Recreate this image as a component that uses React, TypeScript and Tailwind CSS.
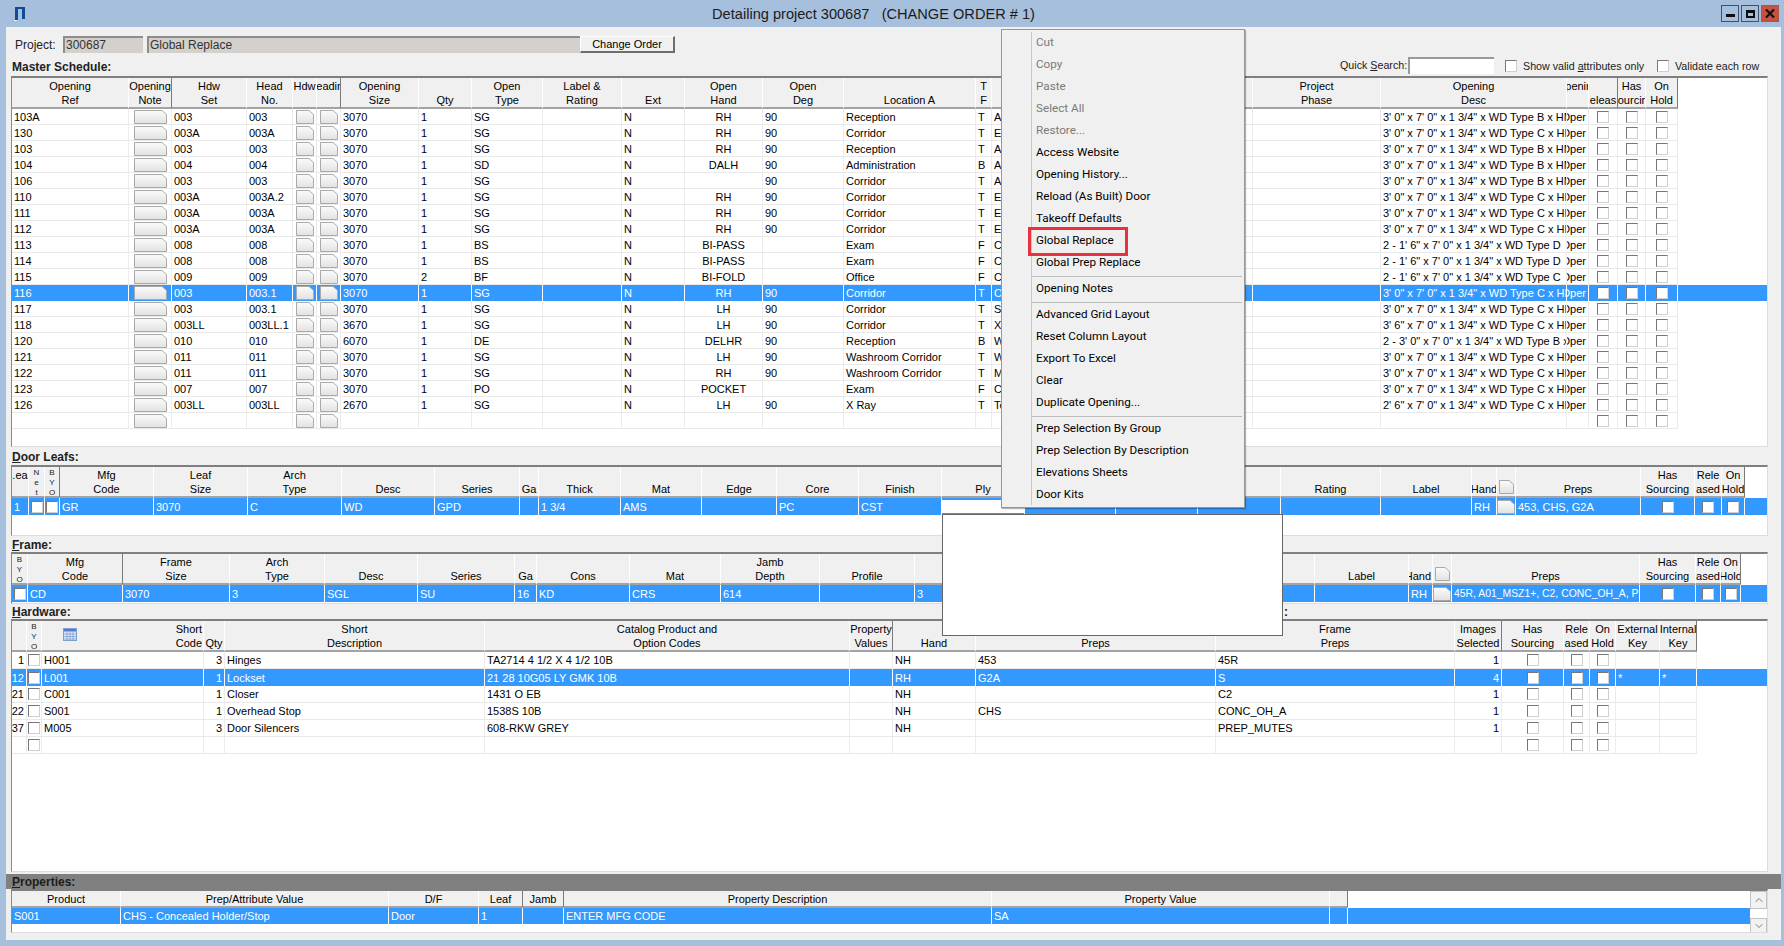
import { ReactNode } from "react";
import { ChevronDown, ChevronUp } from "lucide-react";

type Col = {
  a?: string;
  b?: string;
  dark?: boolean;
  align?: "left" | "center" | "right";
  kind?: "note" | "page" | "check" | "input";
  stack?: string[];
  icon?: "page" | "table";
  headRight?: boolean;
  cellClass?: string;
};

function Page({ w, h }: { w: number; h: number }) {
  return (
    <svg width={w} height={h} viewBox={`0 0 ${w} ${h}`} className="block shrink-0">
      <defs>
        <linearGradient id="pageFill" x1="0" y1="0" x2="0" y2="1">
          <stop offset="0" stopColor="#fbfbfb" />
          <stop offset="1" stopColor="#e2e2e2" />
        </linearGradient>
      </defs>
      <path
        d={`M0.5 0.5H${w - 5}L${w - 0.5} 4.5V${h - 0.5}H0.5Z`}
        fill="url(#pageFill)"
        stroke="#a9a9a9"
      />
    </svg>
  );
}

function TableIcon() {
  return (
    <svg width="14" height="13" viewBox="0 0 14 13" className="block">
      <rect x="0.5" y="0.5" width="13" height="12" fill="#dfe9f7" stroke="#7f9fd0" />
      <rect x="1" y="1" width="12" height="2.5" fill="#4f7fc8" />
      <path d="M1 6H13M1 8.5H13M1 11H13M4 3.5V12.5M7 3.5V12.5M10 3.5V12.5" stroke="#7f9fd0" strokeWidth="0.8" />
    </svg>
  );
}

function Check() {
  return (
    <span className="block w-[12px] h-[12px] shrink-0 bg-white border border-t-[#777777] border-l-[#777777] border-r-[#cfcfcf] border-b-[#cfcfcf]" />
  );
}

function Head({ cols, tpl, twoLine = true }: { cols: Col[]; tpl: string; twoLine?: boolean }) {
  return (
    <div className={`grid ${tpl} w-fit`}>
      {cols.map((c, i) => (
        <div
          key={i}
          className={`relative overflow-hidden bg-[#f0f0f0] border-b-2 border-[#a3a3a3] border-r ${
            c.dark ? "border-r-[#7a7a7a]" : "border-r-white"
          } ${twoLine ? "h-[31px] pt-px" : "h-[17px]"}`}
        >
          {c.stack ? (
            <div className="flex flex-col items-center text-[8px] leading-[10px] text-[#222222]">
              {c.stack.map((s, k) => (
                <span key={k}>{s}</span>
              ))}
            </div>
          ) : (
            <div className={`flex flex-col ${c.headRight ? "items-end pr-px" : "items-center"}`}>
              {twoLine && <span className="h-[14px] leading-[14px] whitespace-nowrap">{c.a}</span>}
              <span className={`leading-[14px] whitespace-nowrap ${twoLine ? "h-[14px]" : "h-[15px] pt-px"}`}>{c.b}</span>
            </div>
          )}
          {c.icon === "page" && (
            <div className="absolute left-[2px] top-[13px]">
              <Page w={15} h={14} />
            </div>
          )}
          {c.icon === "table" && (
            <div className="absolute left-[21px] top-[7px]">
              <TableIcon />
            </div>
          )}
        </div>
      ))}
    </div>
  );
}

function Row({
  cols,
  tpl,
  cells,
  selected,
  height,
}: {
  cols: Col[];
  tpl: string;
  cells: string[];
  selected?: boolean;
  height: string;
}) {
  return (
    <div className={selected ? "bg-[#3399ff] text-white" : "bg-white text-black"}>
      <div className={`grid ${tpl} w-fit ${height} ${selected ? "" : "border-b border-[#e9e9e9]"}`}>
        {cols.map((c, i) => {
          const align =
            c.align === "center"
              ? "justify-center"
              : c.align === "right"
                ? "justify-end pr-[2px]"
                : "justify-start pl-[2px]";
          return (
            <div
              key={i}
              className={`flex items-center overflow-hidden whitespace-nowrap border-r ${
                selected ? "border-white" : "border-[#ececec]"
              } ${c.kind ? "justify-center" : `${align} pt-px`} ${c.cellClass ?? ""}`}
            >
              {c.kind === "note" && <Page w={33} h={14} />}
              {c.kind === "page" && <Page w={18} h={14} />}
              {c.kind === "check" && <Check />}
              {c.kind === "input" && <div className="w-full h-[13px] bg-white" />}
              {!c.kind && cells[i]}
            </div>
          );
        })}
      </div>
    </div>
  );
}

// columns are taken from the screenshot, px between the header separators
const masterTpl =
  "grid-cols-[117px_43px_75px_46px_24px_24px_78px_53px_71px_79px_63px_78px_81px_132px_16px_261px_128px_186px_22px_29px_28px_32px]";
const masterCols: Col[] = [
  { a: "Opening", b: "Ref" },
  { a: "Opening", b: "Note", kind: "note", dark: true },
  { a: "Hdw", b: "Set" },
  { a: "Head", b: "No." },
  { a: "Hdw", kind: "page" },
  { a: "eadir", kind: "page", dark: true },
  { a: "Opening", b: "Size" },
  { b: "Qty" },
  { a: "Open", b: "Type" },
  { a: "Label &", b: "Rating" },
  { b: "Ext" },
  { a: "Open", b: "Hand", align: "center" },
  { a: "Open", b: "Deg" },
  { b: "Location A" },
  { a: "T", b: "F" },
  {},
  { a: "Project", b: "Phase" },
  { a: "Opening", b: "Desc" },
  { a: "penir", align: "right" },
  { b: "eleas", kind: "check", dark: true },
  { a: "Has", b: "ourcir", kind: "check" },
  { a: "On", b: "Hold", kind: "check", dark: true },
];

const typeB = `3' 0" x 7' 0" x 1 3/4" x WD Type B x HM`;
const typeC = `3' 0" x 7' 0" x 1 3/4" x WD Type C x HM`;

const masterData: string[][] = [
  ["103A", "003", "003", "3070", "1", "SG", "RH", "90", "Reception", "T", "A", typeB],
  ["130", "003A", "003A", "3070", "1", "SG", "RH", "90", "Corridor", "T", "E", typeC],
  ["103", "003", "003", "3070", "1", "SG", "RH", "90", "Reception", "T", "A", typeB],
  ["104", "004", "004", "3070", "1", "SD", "DALH", "90", "Administration", "B", "A", typeB],
  ["106", "003", "003", "3070", "1", "SG", "", "90", "Corridor", "T", "A", typeB],
  ["110", "003A", "003A.2", "3070", "1", "SG", "RH", "90", "Corridor", "T", "E", typeC],
  ["111", "003A", "003A", "3070", "1", "SG", "RH", "90", "Corridor", "T", "E", typeC],
  ["112", "003A", "003A", "3070", "1", "SG", "RH", "90", "Corridor", "T", "E", typeC],
  ["113", "008", "008", "3070", "1", "BS", "BI-PASS", "", "Exam", "F", "C", `2 - 1' 6" x 7' 0" x 1 3/4" x WD Type D`],
  ["114", "008", "008", "3070", "1", "BS", "BI-PASS", "", "Exam", "F", "C", `2 - 1' 6" x 7' 0" x 1 3/4" x WD Type D`],
  ["115", "009", "009", "3070", "2", "BF", "BI-FOLD", "", "Office", "F", "C", `2 - 1' 6" x 7' 0" x 1 3/4" x WD Type C`],
  ["116", "003", "003.1", "3070", "1", "SG", "RH", "90", "Corridor", "T", "O", typeC],
  ["117", "003", "003.1", "3070", "1", "SG", "LH", "90", "Corridor", "T", "S", typeC],
  ["118", "003LL", "003LL.1", "3670", "1", "SG", "LH", "90", "Corridor", "T", "X", `3' 6" x 7' 0" x 1 3/4" x WD Type C x HM`],
  ["120", "010", "010", "6070", "1", "DE", "DELHR", "90", "Reception", "B", "W", `2 - 3' 0" x 7' 0" x 1 3/4" x WD Type B x`],
  ["121", "011", "011", "3070", "1", "SG", "LH", "90", "Washroom Corridor", "T", "W", typeC],
  ["122", "011", "011", "3070", "1", "SG", "RH", "90", "Washroom Corridor", "T", "M", typeC],
  ["123", "007", "007", "3070", "1", "PO", "POCKET", "", "Exam", "F", "C", typeC],
  ["126", "003LL", "003LL", "2670", "1", "SG", "LH", "90", "X Ray", "T", "Te", `2' 6" x 7' 0" x 1 3/4" x WD Type C x HM`],
];

function masterCells(r: string[]) {
  return [r[0], "", r[1], r[2], "", "", r[3], r[4], r[5], "", "N", r[6], r[7], r[8], r[9], r[10], "", r[11], "Oper", "", "", ""];
}

const leafTpl =
  "grid-cols-[17px_16px_15px_94px_94px_94px_93px_85px_19px_82px_81px_75px_82px_83px_83px_91px_82px_83px_100px_91px_25px_19px_125px_54px_27px_23px]";
const leafCols: Col[] = [
  { a: ".ea" },
  { stack: ["N", "e", "t"], kind: "check" },
  { stack: ["B", "Y", "O"], kind: "check", dark: true },
  { a: "Mfg", b: "Code" },
  { a: "Leaf", b: "Size" },
  { a: "Arch", b: "Type" },
  { b: "Desc" },
  { b: "Series" },
  { b: "Ga" },
  { b: "Thick" },
  { b: "Mat" },
  { b: "Edge" },
  { b: "Core" },
  { b: "Finish" },
  { b: "Ply", kind: "input" },
  {},
  {},
  {},
  { b: "Rating" },
  { b: "Label" },
  { b: "Hand" },
  { icon: "page", kind: "page" },
  { b: "Preps" },
  { a: "Has", b: "Sourcing", kind: "check" },
  { a: "Rele", b: "ased", kind: "check" },
  { a: "On", b: "Hold", kind: "check", dark: true },
];
const leafCells = ["1", "", "", "GR", "3070", "C", "WD", "GPD", "", "1 3/4", "AMS", "", "PC", "CST", "", "", "", "", "", "", "RH", "", "453, CHS, G2A", "", "", ""];

const frameTpl =
  "grid-cols-[16px_95px_107px_95px_93px_97px_22px_93px_91px_99px_95px_400px_94px_24px_19px_188px_56px_25px_20px]";
const frameCols: Col[] = [
  { stack: ["B", "Y", "O"], kind: "check" },
  { a: "Mfg", b: "Code", dark: true },
  { a: "Frame", b: "Size" },
  { a: "Arch", b: "Type" },
  { b: "Desc" },
  { b: "Series" },
  { b: "Ga" },
  { b: "Cons" },
  { b: "Mat" },
  { a: "Jamb", b: "Depth" },
  { b: "Profile" },
  {},
  { b: "Label" },
  { b: "Hand", headRight: true },
  { icon: "page", kind: "page" },
  { b: "Preps", cellClass: "text-[10.4px]" },
  { a: "Has", b: "Sourcing", kind: "check" },
  { a: "Rele", b: "ased", kind: "check" },
  { a: "On", b: "Hold", kind: "check", dark: true },
];
const frameCells = ["", "CD", "3070", "3", "SGL", "SU", "16", "KD", "CRS", "614", "", "3", "", "RH", "", "45R, A01_MSZ1+, C2, CONC_OH_A, P", "", "", ""];

const hardwareTpl =
  "grid-cols-[15px_15px_162px_21px_260px_365px_43px_83px_240px_239px_47px_62px_26px_26px_44px_37px]";
const hardwareCols: Col[] = [
  { align: "right" },
  { stack: ["B", "Y", "O"], kind: "check" },
  { a: "Short", b: "Code", icon: "table", headRight: true },
  { b: "Qty", align: "right" },
  { a: "Short", b: "Description" },
  { a: "Catalog Product and", b: "Option Codes" },
  { a: "Property", b: "Values", dark: true },
  { b: "Hand" },
  { b: "Preps" },
  { a: "Frame", b: "Preps" },
  { a: "Images", b: "Selected", align: "right", dark: true },
  { a: "Has", b: "Sourcing", kind: "check" },
  { a: "Rele", b: "ased", kind: "check" },
  { a: "On", b: "Hold", kind: "check" },
  { a: "External", b: "Key" },
  { a: "Internal", b: "Key", dark: true },
];
const hardwareData: string[][] = [
  ["1", "", "H001", "3", "Hinges", "TA2714 4 1/2 X 4 1/2 10B", "", "NH", "453", "45R", "1", "", "", "", "", ""],
  ["12", "", "L001", "1", "Lockset", "21 28 10G05 LY GMK 10B", "", "RH", "G2A", "S", "4", "", "", "", "*", "*"],
  ["21", "", "C001", "1", "Closer", "1431 O EB", "", "NH", "", "C2", "1", "", "", "", "", ""],
  ["22", "", "S001", "1", "Overhead Stop", "1538S 10B", "", "NH", "CHS", "CONC_OH_A", "1", "", "", "", "", ""],
  ["37", "", "M005", "3", "Door Silencers", "608-RKW GREY", "", "NH", "", "PREP_MUTES", "1", "", "", "", "", ""],
  ["", "", "", "", "", "", "", "", "", "", "", "", "", "", "", ""],
];

const propsTpl = "grid-cols-[109px_268px_90px_44px_41px_428px_338px_18px]";
const propsCols: Col[] = [
  { b: "Product" },
  { b: "Prep/Attribute Value" },
  { b: "D/F" },
  { b: "Leaf", dark: true },
  { b: "Jamb", dark: true },
  { b: "Property Description" },
  { b: "Property Value" },
  { dark: true },
];
const propsCells = ["S001", "CHS - Concealed Holder/Stop", "Door", "1", "", "ENTER MFG CODE", "SA", ""];

const menuGroups: { label: string; off?: boolean }[][] = [
  [
    { label: "Cut", off: true },
    { label: "Copy", off: true },
    { label: "Paste", off: true },
    { label: "Select All", off: true },
    { label: "Restore...", off: true },
    { label: "Access Website" },
    { label: "Opening History..." },
    { label: "Reload (As Built) Door" },
    { label: "Takeoff Defaults" },
    { label: "Global Replace" },
    { label: "Global Prep Replace" },
  ],
  [{ label: "Opening Notes" }],
  [
    { label: "Advanced Grid Layout" },
    { label: "Reset Column Layout" },
    { label: "Export To Excel" },
    { label: "Clear" },
    { label: "Duplicate Opening..." },
  ],
  [
    { label: "Prep Selection By Group" },
    { label: "Prep Selection By Description" },
    { label: "Elevations Sheets" },
    { label: "Door Kits" },
  ],
];

function Box({ h, children }: { h: string; children: ReactNode }) {
  return (
    <div className={`ml-[5px] w-[1757px] ${h} overflow-hidden bg-white border-t-2 border-l border-r border-b border-t-[#7f7f7f] border-l-[#8a8a8a] border-r-[#dddddd] border-b-[#dddddd]`}>
      {children}
    </div>
  );
}

function ContextMenu() {
  return (
    <div className="absolute left-[1001px] top-[29px] w-[244px] h-[479px] bg-[#f0f0f0] border border-[#979797] py-[2px] pr-[2px] text-[11.7px] [font-family:'Roboto',sans-serif] shadow-[1px_1px_1px_rgba(0,0,0,0.3)]">
      <div className="ml-[29px] h-full border-l border-[#c9c9c9] pl-[4px]">
        {menuGroups.map((group, g) => (
          <div key={g}>
            {g > 0 && (
              <div className="h-[4px] -ml-[4px] flex items-center">
                <div className="w-full h-px bg-[#bdbdbd]" />
              </div>
            )}
            {group.map((item) => (
              <div
                key={item.label}
                className={`h-[22px] flex items-center ${item.off ? "text-[#7a7a7a]" : "text-black"}`}
              >
                {item.label}
              </div>
            ))}
          </div>
        ))}
      </div>
    </div>
  );
}

export default function App() {
  return (
    <div className="relative w-[1784px] h-[946px] overflow-hidden bg-[#a6bfdc] flex flex-col text-[11px] text-black [font-family:'Liberation_Sans',Arial,sans-serif]">
      {/* title bar */}
      <div className="h-[27px] flex items-center shrink-0">
        <svg width="12" height="16" viewBox="0 0 12 16" className="ml-[14px]">
          <path d="M1 14V1H11V13H8V3H4V14Z" fill="#0f4c97" />
          <path d="M0 15.5L4 14H1Z" fill="#ffffff" />
        </svg>
        <div className="flex-1 pt-[2px] text-center text-[14.6px] text-[#1b1b1b]">Detailing project 300687&nbsp;&nbsp; (CHANGE ORDER # 1)</div>
        <div className="flex gap-[2px] mr-[5px]">
          <div className="w-[18px] h-[17px] border border-[#3e5270] flex items-end justify-center pb-[4px]">
            <div className="w-[9px] h-[3px] bg-[#0d0d0d]" />
          </div>
          <div className="w-[18px] h-[17px] border border-[#3e5270] flex items-center justify-center">
            <div className="w-[9px] h-[8px] border-2 border-t-[3px] border-[#0d0d0d]" />
          </div>
          <div className="w-[18px] h-[17px] border border-[#a8584a] bg-[#c9503e] flex items-center justify-center">
            <svg width="10" height="9" viewBox="0 0 10 9">
              <path d="M1 0.5L9 8.5M9 0.5L1 8.5" stroke="#111111" strokeWidth="2.2" />
            </svg>
          </div>
        </div>
      </div>

      <div className="ml-[6px] mr-[3px] mb-[6px] flex-1 bg-[#f0f0f0] flex flex-col">
        {/* project line */}
        <div className="mt-[9px] h-[17px] pl-[9px] flex items-stretch">
          <div className="w-[48px] flex items-center text-[12px] text-[#222222]">Project:</div>
          <div className="w-[80px] bg-[#d4d0cb] border-t-2 border-l-2 border-[#8c8c8c] pl-px pb-[2px] flex items-center text-[12px] text-[#333333]">300687</div>
          <div className="ml-[4px] w-[433px] bg-[#d4d0cb] border-t-2 border-l-2 border-[#8c8c8c] pl-px pb-[2px] flex items-center text-[12px] text-[#333333]">Global Replace</div>
          <div className="w-[95px] bg-[#f0f0f0] border-t border-l border-t-white border-l-white border-r-2 border-b-2 border-r-[#6e6e6e] border-b-[#6e6e6e] flex items-center justify-center">Change Order</div>
        </div>

        {/* master schedule heading + search */}
        <div className="mt-[4px] h-[19px] flex items-center pl-[6px]">
          <div className="flex-1 font-bold text-[12px] text-[#222222]">Master Schedule:</div>
          <div className="w-[441px] flex items-center text-[10.7px] text-[#222222] whitespace-nowrap">
            <div className="w-[68px] -mt-[3px]">
              Quick <span className="underline">S</span>earch:
            </div>
            <div className="w-[86px] h-[17px] -mt-[2px] bg-white border-t-2 border-l-2 border-[#9a9a9a]" />
            <div className="ml-[11px]">
              <Check />
            </div>
            <div className="ml-[6px] w-[134px]">
              Show valid <span className="underline">a</span>ttributes only
            </div>
            <Check />
            <div className="ml-[6px]">Validate each row</div>
          </div>
        </div>

        <Box h="h-[371px]">
          <Head cols={masterCols} tpl={masterTpl} />
          {masterData.map((r, i) => (
            <Row key={i} cols={masterCols} tpl={masterTpl} cells={masterCells(r)} selected={r[0] === "116"} height="h-[16px]" />
          ))}
          <Row
            cols={masterCols}
            tpl={masterTpl}
            cells={masterCells(["", "", "", "", "", "", "", "", "", "", "", ""]).map(() => "")}
            height="h-[16px]"
          />
        </Box>

        <div className="h-[18px] pl-[6px] pt-px flex items-center font-bold text-[12px] text-[#222222]">
          <span>
            <span className="underline">D</span>oor Leafs:
          </span>
        </div>
        <Box h="h-[71px]">
          <Head cols={leafCols} tpl={leafTpl} />
          <Row cols={leafCols} tpl={leafTpl} cells={leafCells} selected height="h-[17px]" />
        </Box>

        <div className="h-[16px] pl-[6px] pt-px flex items-center font-bold text-[12px] text-[#222222]">
          <span>
            <span className="underline">F</span>rame:
          </span>
        </div>
        <Box h="h-[52px]">
          <Head cols={frameCols} tpl={frameTpl} />
          <Row cols={frameCols} tpl={frameTpl} cells={frameCells} selected height="h-[17px]" />
        </Box>

        <div className="h-[15px] pl-[6px] flex items-center font-bold text-[12px] text-[#222222]">
          <span className="w-[1272px]">
            <span className="underline">H</span>ardware:
          </span>
          <span>:</span>
        </div>
        <Box h="h-[253px]">
          <Head cols={hardwareCols} tpl={hardwareTpl} />
          {hardwareData.map((r, i) => (
            <Row key={i} cols={hardwareCols} tpl={hardwareTpl} cells={r} selected={i === 1} height="h-[17px]" />
          ))}
        </Box>

        <div className="mt-[2px] h-[15px] bg-[#808080] pl-[6px] flex items-center font-bold text-[12px] text-[#1c1c1c]">
          <span>
            <span className="underline">P</span>roperties:
          </span>
        </div>
        <Box h="h-[44px]">
          <div className="flex">
            <div className="flex-1">
              <Head cols={propsCols} tpl={propsTpl} twoLine={false} />
              <Row cols={propsCols} tpl={propsTpl} cells={propsCells} selected height="h-[16px]" />
            </div>
            <div className="w-[17px] flex flex-col bg-white">
              <div className="h-[18px] border border-[#c4c4c4] bg-[#f2f2f2] flex items-center justify-center">
                <ChevronUp size={12} strokeWidth={1.5} color="#555555" />
              </div>
              <div className="h-[9px]" />
              <div className="h-[15px] border border-[#c4c4c4] bg-[#f2f2f2] flex items-center justify-center">
                <ChevronDown size={12} strokeWidth={1.5} color="#555555" />
              </div>
            </div>
          </div>
        </Box>
      </div>

      {/* dropdown list left open under the Ply cell */}
      <div className="absolute left-[942px] top-[514px] w-[341px] h-[122px] bg-white border border-[#666666]" />
      <ContextMenu />
      <div className="absolute left-[1028px] top-[227px] w-[100px] h-[29px] border-[3px] border-[#e8323e]" />
    </div>
  );
}
